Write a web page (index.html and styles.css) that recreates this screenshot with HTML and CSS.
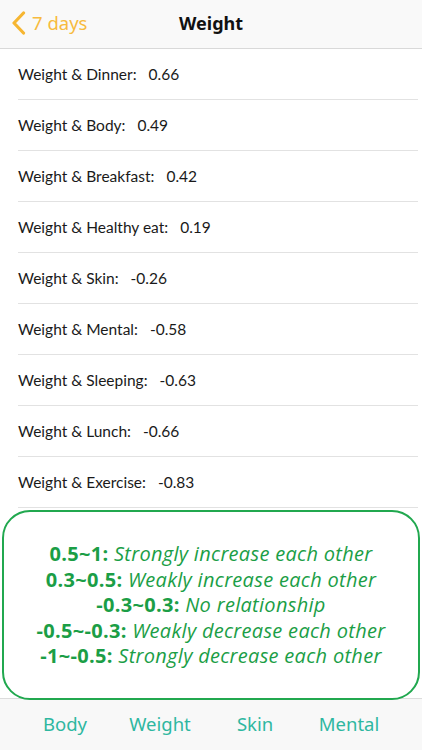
FILE: index.html
```html
<!DOCTYPE html>
<html>
<head>
<meta charset="utf-8">
<link rel="stylesheet" href="styles.css">
</head>
<body>
<div class="screen">
  <header class="nav">
    <div class="back">
      <svg class="chev" width="15" height="24" viewBox="0 0 15 24"><path d="M12.5 2 L3 12 L12.5 22" fill="none" stroke="#f6b632" stroke-width="3.2" stroke-linecap="round" stroke-linejoin="round"/></svg>
      <span class="back-text">7 days</span>
    </div>
    <div class="title">Weight</div>
  </header>
  <main class="list">
    <div class="row"><span class="label">Weight &amp; Dinner:</span><span class="val">0.66</span></div>
    <div class="row"><span class="label">Weight &amp; Body:</span><span class="val">0.49</span></div>
    <div class="row"><span class="label">Weight &amp; Breakfast:</span><span class="val">0.42</span></div>
    <div class="row"><span class="label">Weight &amp; Healthy eat:</span><span class="val">0.19</span></div>
    <div class="row"><span class="label">Weight &amp; Skin:</span><span class="val">-0.26</span></div>
    <div class="row"><span class="label">Weight &amp; Mental:</span><span class="val">-0.58</span></div>
    <div class="row"><span class="label">Weight &amp; Sleeping:</span><span class="val">-0.63</span></div>
    <div class="row"><span class="label">Weight &amp; Lunch:</span><span class="val">-0.66</span></div>
    <div class="row"><span class="label">Weight &amp; Exercise:</span><span class="val">-0.83</span></div>
    <div class="row"></div>
    <div class="row"></div>
    <div class="row"></div>
    <div class="row"></div>
  </main>
  <div class="legend">
    <p><b>0.5~1:</b> <i>Strongly increase each other</i></p>
    <p><b>0.3~0.5:</b> <i>Weakly increase each other</i></p>
    <p><b>-0.3~0.3:</b> <i>No relationship</i></p>
    <p><b>-0.5~-0.3:</b> <i>Weakly decrease each other</i></p>
    <p><b>-1~-0.5:</b> <i>Strongly decrease each other</i></p>
  </div>
  <footer class="tabs">
    <span class="tab">Body</span>
    <span class="tab">Weight</span>
    <span class="tab">Skin</span>
    <span class="tab">Mental</span>
  </footer>
</div>
</body>
</html>
```
FILE: styles.css
```css
html, body {
  margin: 0;
  padding: 0;
  background: #fff;
}
.screen {
  position: relative;
  width: 422px;
  height: 750px;
  display: flex;
  flex-direction: column;
  overflow: hidden;
  font-family: "Noto Sans", sans-serif;
}
.nav {
  position: relative;
  height: 48px;
  flex: none;
  background: #f9f9f9;
  border-bottom: 1px solid #d9d9d9;
  display: flex;
  align-items: center;
  justify-content: center;
}
.back {
  position: absolute;
  left: 11px;
  top: 11px;
  display: flex;
  align-items: center;
  gap: 6px;
}
.back-text {
  color: #f7bb3e;
  font-size: 18.5px;
  line-height: 22px;
}
.title {
  font-size: 18px;
  font-weight: 700;
  color: #111;
  margin-top: -2px;
}
.list {
  flex: 1;
  overflow: hidden;
  padding-left: 18px;
  padding-right: 4px;
}
.row {
  height: 50px;
  border-bottom: 1px solid #e2e2e2;
  display: flex;
  align-items: center;
  font-family: "Lato", sans-serif;
  font-size: 15.5px;
  color: #1a1a1a;
}
.val {
  margin-left: 12px;
}
.legend {
  position: absolute;
  left: 2px;
  top: 510px;
  width: 414px;
  height: 186px;
  border: 2px solid #21a84f;
  border-radius: 28px;
  background: #fff;
  display: flex;
  flex-direction: column;
  justify-content: center;
  align-items: center;
  color: #1b9e46;
  font-family: "Open Sans", sans-serif;
  font-size: 20px;
  letter-spacing: 0.3px;
  line-height: 25.5px;
}
.legend p {
  margin: 0;
  white-space: nowrap;
}
.legend b {
  font-weight: 700;
}
.tabs {
  height: 51px;
  flex: none;
  background: #f8f8f8;
  border-top: 1px solid #dcdcdc;
  display: grid;
  grid-template-columns: 94px 96px 94px 94px;
  padding-left: 18px;
  align-items: center;
}
.tab {
  text-align: center;
  color: #2eb7a0;
  font-size: 18.5px;
  margin-top: -3px;
}
```
